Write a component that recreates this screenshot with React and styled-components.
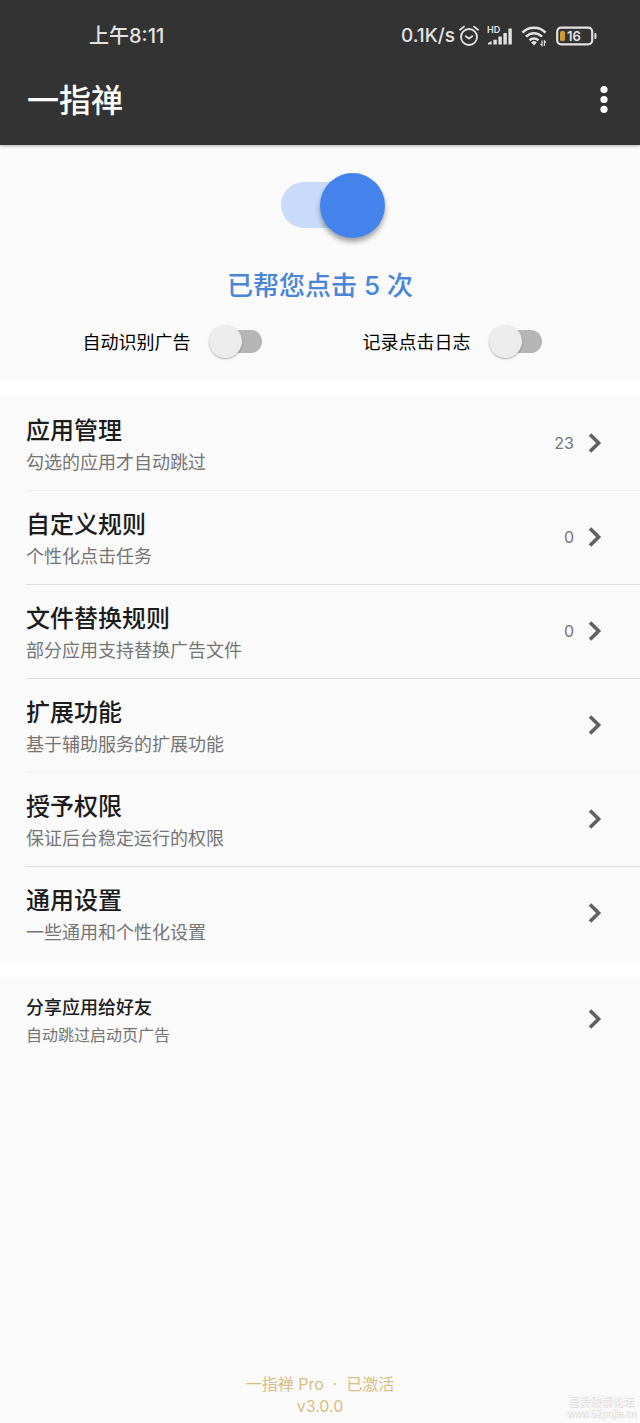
import { useState } from "react";
import styled, { createGlobalStyle, css } from "styled-components";

const GlobalStyle = createGlobalStyle`
    * {
        box-sizing: border-box;
    }
    body {
        margin: 0;
        background-color: #fafafa;
        font-family: Inter, "Noto Sans CJK SC", sans-serif;
    }
    button, input {
        margin: 0;
        font-family: inherit;
    }
`;

const Page = styled.div`
    position: relative;
    display: flex;
    flex-direction: column;
    min-height: 100vh;
`;

const Header = styled.header`
    position: relative;
    padding-bottom: 15px;
    background-color: #333333;
    color: white;
    box-shadow: 0 1px 3px rgba(0, 0, 0, 0.3);
`;

const StatusBar = styled.div`
    display: flex;
    align-items: center;
    justify-content: space-between;
    height: 72px;
    padding: 0 43px 0 89px;
    font-size: 20px;
    font-weight: 500;
    line-height: 24px;
    color: #e2e2e2;
`;

const StatusIcons = styled.div`
    display: flex;
    align-items: center;
    gap: 8px;
`;

const Speed = styled.span`
    font-size: 19px;
    margin-right: -4px;
`;

const AppBar = styled.div`
    display: flex;
    align-items: center;
    justify-content: space-between;
    height: 58px;
    padding: 0 24px 0 27px;
`;

const AppTitle = styled.h1`
    margin: 0;
    font-size: 32px;
    font-weight: 500;
    line-height: 48px;
`;

const MenuButton = styled.button`
    display: flex;
    padding: 0 0 2px;
    border: none;
    background: none;
    color: inherit;
    cursor: pointer;
`;

const Main = styled.main`
    display: flex;
    flex-direction: column;
    gap: 16px;
    background-color: white;
`;

const Panel = styled.section`
    background-color: #fafafa;
`;

const Summary = styled(Panel)`
    display: flex;
    flex-direction: column;
    align-items: center;
    padding: 37px 0 21px;
`;

const MasterRow = styled.div`
    display: flex;
    padding-left: 19px;
`;

const Count = styled.p`
    margin: 39px 0 18px;
    font-size: 26px;
    font-weight: 500;
    line-height: 38px;
    color: #4a86d8;
`;

const Options = styled.div`
    display: grid;
    grid-template-columns: 1fr 1fr;
    width: 100%;
    padding: 0 48px 0 32px;
`;

const Option = styled.label`
    display: flex;
    align-items: center;
    justify-content: center;
    gap: 22px;
    height: 36px;
    font-size: 18px;
    color: #000000;
`;

const Switch = styled.input`
    appearance: none;
    display: flex;
    align-items: center;
    justify-content: flex-start;
    width: 49px;
    height: 23px;
    border-radius: 23px;
    background-color: #b5b5b5;
    cursor: pointer;

    &::before {
        content: "";
        flex: none;
        width: 33px;
        height: 33px;
        margin: 0 -4px;
        border-radius: 50%;
        background-color: #ececec;
        box-shadow: 0 1px 2px rgba(0, 0, 0, 0.3);
    }

    &:checked {
        justify-content: flex-end;
        background-color: #c9dbf8;
    }
    &:checked::before {
        background-color: #4482ec;
    }

    ${props => props.$large && css`
        width: 97px;
        height: 46px;

        &::before {
            width: 65px;
            height: 65px;
            margin: 0 -7px;
            box-shadow: 0 4px 5px rgba(0, 0, 0, 0.35);
        }
    `}
`;

const Row = styled.button`
    display: flex;
    align-items: center;
    width: 100%;
    height: ${props => props.$small ? "84px" : "94px"};
    padding: 0 38px 0 26px;
    border: none;
    background: none;
    text-align: left;
    cursor: pointer;
`;

const RowItem = styled.li`
    list-style: none;
    & + & {
        background: linear-gradient(#dedede, #dedede) 26px 0 / 100% 1px no-repeat;
    }
    &:nth-child(3n + 2) {
        background-image: linear-gradient(#f0f0f0, #f0f0f0);
    }
`;

const List = styled.ul`
    margin: 0;
    padding: 0 0 1px;
`;

const RowText = styled.span`
    display: flex;
    flex: 1;
    flex-direction: column;
    padding-top: 3px;
`;

const RowTitle = styled.span`
    font-size: ${props => props.$small ? "18px" : "24px"};
    font-weight: 500;
    line-height: ${props => props.$small ? "28px" : "36px"};
    color: #1c1c1c;
`;

const RowNote = styled.span`
    font-size: ${props => props.$small ? "16px" : "18px"};
    line-height: ${props => props.$small ? "26px" : "28px"};
    color: #757575;
`;

const RowCount = styled.span`
    margin-right: 14px;
    font-size: 16px;
    color: #757575;
`;

const Footer = styled.footer`
    margin-top: auto;
    padding-bottom: 6px;
    font-size: 16px;
    line-height: 22px;
    text-align: center;
    white-space: pre;
    color: #d8bd85;
`;

const Watermark = styled.div`
    position: absolute;
    right: 4px;
    bottom: 3px;
    display: flex;
    flex-direction: column;
    align-items: center;
    font-size: 11px;
    line-height: 12px;
    color: white;
    text-shadow: 0 0 1px #c4c4c4, 1px 1px 1px #d4d4d4;
`;

const WatermarkUrl = styled.span`
    font-family: "Liberation Sans", sans-serif;
    font-size: 10px;
`;

const BatteryText = styled.text`
    font-size: 13px;
    font-weight: 600;
    fill: #e2e2e2;
`;

const NetworkText = styled.text`
    font-size: 9px;
    font-weight: 600;
    fill: #e2e2e2;
`;

const AlarmIcon = () => (
    <svg width="20" height="22" viewBox="0 0 20 22" fill="none" stroke="#e2e2e2" strokeWidth="1.8" strokeLinecap="round" strokeLinejoin="round">
        <circle cx="10" cy="12" r="8" />
        <path d="M6.8 11.2 10 13.6l3.2-2.4M1 4.8 5 1.6M19 4.8l-4-3.2" />
    </svg>
);

const SignalIcon = () => (
    <svg width="26" height="22" viewBox="0 0 26 22" fill="#e2e2e2">
        <NetworkText x="0" y="7.5">HD</NetworkText>
        <path d="M1 19.5v-1.4L4.6 16v3.5zM6.4 14.8h3.4v4.7H6.4zM11.4 11.5h3.4v8h-3.4zM16.4 8h3.4v11.5h-3.4zM21.4 3.5h3.4v16h-3.4z" />
    </svg>
);

const WifiIcon = () => (
    <svg width="27" height="22" viewBox="0 0 27 22" fill="none" stroke="#e2e2e2" strokeWidth="2.6">
        <path d="M1.5 7.7a16 16 0 0 1 23 0M5 11.7a11 11 0 0 1 16 0M8.6 15.4a6.2 6.2 0 0 1 8.8 0" />
        <path d="m13 20.6-2.8-3.2a4 4 0 0 1 5.6 0z" fill="#e2e2e2" stroke="none" />
        <path d="M21 15.5v5l-1.6-1.6M23.4 21v-5l1.6 1.6" strokeWidth="1.2" />
    </svg>
);

const BatteryIcon = () => (
    <svg width="41" height="20" viewBox="0 0 41 20">
        <rect x="1.2" y="1.7" width="35" height="16.6" rx="4" fill="none" stroke="#e2e2e2" strokeWidth="2.2" />
        <rect x="4" y="5" width="5" height="10" rx="1.5" fill="#d09a2e" />
        <rect x="38.4" y="7" width="2" height="6" rx="1" fill="#e2e2e2" />
        <BatteryText x="11" y="14.8">16</BatteryText>
    </svg>
);

const MoreIcon = () => (
    <svg width="24" height="32" viewBox="0 0 24 32" fill="currentColor">
        <circle cx="12" cy="5.5" r="3.6" />
        <circle cx="12" cy="15.5" r="3.6" />
        <circle cx="12" cy="25.3" r="3.6" />
    </svg>
);

const Chevron = () => (
    <svg width="14" height="22" viewBox="0 0 14 22" fill="none" stroke="#616161" strokeWidth="3.6">
        <path d="m2 2.4 8.6 8.6L2 19.6" />
    </svg>
);

const rows = [
    { title: "应用管理", note: "勾选的应用才自动跳过", count: 23 },
    { title: "自定义规则", note: "个性化点击任务", count: 0 },
    { title: "文件替换规则", note: "部分应用支持替换广告文件", count: 0 },
    { title: "扩展功能", note: "基于辅助服务的扩展功能" },
    { title: "授予权限", note: "保证后台稳定运行的权限" },
    { title: "通用设置", note: "一些通用和个性化设置" },
];

const App = () => {
    const [enabled, setEnabled] = useState(true)
    const [detectAds, setDetectAds] = useState(false)
    const [logClicks, setLogClicks] = useState(false)

    return (
        <Page>
            <GlobalStyle/>
            <Header>
                <StatusBar>
                    <span>上午8:11</span>
                    <StatusIcons>
                        <Speed>0.1K/s</Speed>
                        <AlarmIcon/>
                        <SignalIcon/>
                        <WifiIcon/>
                        <BatteryIcon/>
                    </StatusIcons>
                </StatusBar>
                <AppBar>
                    <AppTitle>一指禅</AppTitle>
                    <MenuButton aria-label="更多"><MoreIcon/></MenuButton>
                </AppBar>
            </Header>
            <Main>
                <Summary>
                    <MasterRow>
                        <Switch type="checkbox" role="switch" aria-label="一指禅" $large checked={enabled} onChange={()=> setEnabled(!enabled)} />
                    </MasterRow>
                    <Count>已帮您点击 5 次</Count>
                    <Options>
                        <Option>
                            自动识别广告
                            <Switch type="checkbox" role="switch" checked={detectAds} onChange={()=> setDetectAds(!detectAds)} />
                        </Option>
                        <Option>
                            记录点击日志
                            <Switch type="checkbox" role="switch" checked={logClicks} onChange={()=> setLogClicks(!logClicks)} />
                        </Option>
                    </Options>
                </Summary>
                <Panel>
                    <List>
                        {rows.map((row) =>
                        <RowItem key={row.title}>
                            <Row>
                                <RowText>
                                    <RowTitle>{row.title}</RowTitle>
                                    <RowNote>{row.note}</RowNote>
                                </RowText>
                                {row.count !== undefined && <RowCount>{row.count}</RowCount>}
                                <Chevron/>
                            </Row>
                        </RowItem>)}
                    </List>
                </Panel>
                <Panel>
                    <Row $small>
                        <RowText>
                            <RowTitle $small>分享应用给好友</RowTitle>
                            <RowNote $small>自动跳过启动页广告</RowNote>
                        </RowText>
                        <Chevron/>
                    </Row>
                </Panel>
            </Main>
            <Footer>
                <div>一指禅 Pro  ·  已激活</div>
                <div>v3.0.0</div>
            </Footer>
            <Watermark>
                <span>吾爱破解论坛</span>
                <WatermarkUrl>www.52pojie.cn</WatermarkUrl>
            </Watermark>
        </Page>
    )
}

export default App
